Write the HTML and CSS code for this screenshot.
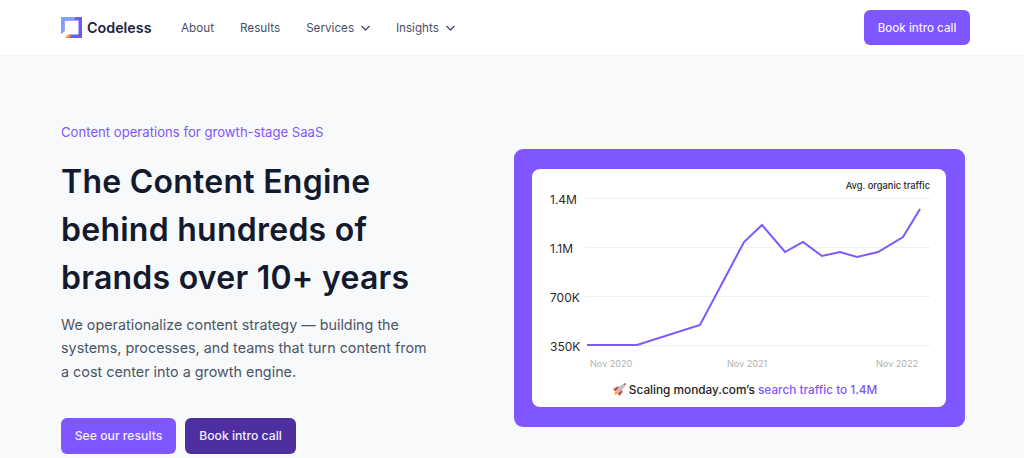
FILE: index.html
```html
<!DOCTYPE html>
<html lang="en">
<head>
	<meta charset="UTF-8">
	<title>Codeless</title>
	<link rel="stylesheet" href="styles.css">
</head>
<body>
	<header class="header">
		<a class="logo" href="#">
			<svg class="logoMark" viewBox="0 0 22 22" width="22" height="22">
				<path d="M0 0H21V21H6L9 17.500H17.500V3.500H3.500V14L0 17Z" fill="#6a5cf5"/>
				<path d="M0 0H15L12 3.500H3.500V14L0 17Z" fill="#7fa2ff"/>
				<path d="M4 21L7 17.500H11L8 21Z" fill="#f7903f"/>
			</svg>
			<span>Codeless</span>
		</a>
		<nav class="nav">
			<a href="#">About</a>
			<a href="#">Results</a>
			<a href="#">Services <svg class="chev" viewBox="0 0 9 6" width="9" height="6"><path d="M.5 1L4.500 5L8.500 1"/></svg></a>
			<a href="#">Insights <svg class="chev" viewBox="0 0 9 6" width="9" height="6"><path d="M.5 1L4.500 5L8.500 1"/></svg></a>
		</nav>
		<a class="btn btnHeader" href="#">Book intro call</a>
	</header>
	<main class="hero">
		<div class="heroText">
			<p class="eyebrow">Content operations for growth-stage SaaS</p>
			<h1>The Content Engine behind hundreds of brands over 10+ years</h1>
			<p class="lead">We operationalize content strategy — building the systems, processes, and teams that turn content from a cost center into a growth engine.</p>
			<div class="actions">
				<a class="btn" href="#">See our results</a>
				<a class="btn btnDark" href="#">Book intro call</a>
			</div>
		</div>
		<div class="panel">
			<div class="card">
				<svg class="chart" viewBox="0 0 414 208" width="414" height="208">
					<g class="grid">
						<path d="M53 29.5H398"/>
						<path d="M53 78.5H398"/>
						<path d="M53 127.5H398"/>
						<path d="M53 176.5H398"/>
					</g>
					<text class="title" x="398" y="20" text-anchor="end">Avg. organic traffic</text>
					<g class="yLabels">
						<text x="18" y="34.500">1.4M</text>
						<text x="18" y="83.500">1.1M</text>
						<text x="18" y="132.500">700K</text>
						<text x="18" y="181.500">350K</text>
					</g>
					<g class="xLabels">
						<text x="58" y="198">Nov 2020</text>
						<text x="195" y="198">Nov 2021</text>
						<text x="344" y="198">Nov 2022</text>
					</g>
					<polyline class="line" points="55,176 105,176 168,156 212,73 230,56 253,83 271,73 290,87 308,83 325,88 346,83 371,68 388,40"/>
				</svg>
				<p class="caption">
					<svg class="rocket" viewBox="0 0 14 14" width="13" height="13">
						<path d="M1 13L3 8L6 11Z" fill="#f6a623"/>
						<path d="M0 7L4 4H7L3 9Z" fill="#d8453e"/>
						<path d="M7 14L10 10V7L5 11Z" fill="#d8453e"/>
						<path d="M3 8.5L8 3Q10.500 1 14 0Q13 3.500 11 6L5.500 11Z" fill="#b8c2cc"/>
						<path d="M11 1Q12.500 .5 14 0Q13.500 1.500 13 3Z" fill="#d8453e"/>
					</svg>
					Scaling monday.com’s <span class="accent">search traffic to 1.4M</span>
				</p>
			</div>
		</div>
	</main>
</body>
</html>
```

FILE: styles.css
```css
* {
	margin: 0;
	padding: 0;
	box-sizing: border-box;
}
body {
	background-color: #f8f9fb;
	color: #141a2e;
	font-family: "Inter", "Liberation Sans", sans-serif;
}
a {
	color: inherit;
	text-decoration: none;
}
.header {
	display: flex;
	align-items: center;
	height: 56px;
	padding: 0 54px 0 61px;
	background-color: #fff;
	border-bottom: 1px solid #f4f5f7;
}
.logo {
	display: flex;
	align-items: center;
	gap: 4px;
	font-size: 14.300px;
	font-weight: 600;
	color: #20233f;
}
.logoMark {
	display: block;
}
.nav {
	display: flex;
	align-items: center;
	gap: 26px;
	margin-left: 29.500px;
	font-size: 11.700px;
	color: #4a4f68;
}
.chev {
	margin-left: 3.500px;
	vertical-align: 1px;
}
.chev path {
	fill: none;
	stroke: #4a4f68;
	stroke-width: 1.400;
}
.btn {
	display: flex;
	align-items: center;
	justify-content: center;
	height: 36px;
	width: 115px;
	background-color: #7f56ff;
	color: #f3efff;
	border-radius: 6px;
	font-size: 12.200px;
	font-weight: 500;
}
.btnHeader {
	width: 106px;
	height: 35px;
	margin-left: auto;
	font-size: 11.600px;
}
.btnDark {
	width: 111px;
	background-color: #4e2ea0;
}
.hero {
	display: flex;
	justify-content: space-between;
	padding: 68px 59px 4px 61px;
}
.heroText {
	width: 372px;
}
.eyebrow {
	font-size: 13.100px;
	line-height: 16px;
	letter-spacing: 0.02px;
	color: #7f56ff;
}
h1 {
	margin-top: 17.500px;
	font-size: 32px;
	font-weight: 600;
	line-height: 48px;
	letter-spacing: 0.25px;
}
.lead {
	margin-top: 11.500px;
	font-size: 14.350px;
	line-height: 23.300px;
	color: #4a5568;
}
.actions {
	display: flex;
	gap: 9px;
	margin-top: 35px;
}
.panel {
	align-self: flex-start;
	margin-top: 25px;
	padding: 20px 18px;
	width: 451px;
	height: 278px;
	background-color: #7f56ff;
	border-radius: 9px;
}
.card {
	width: 414px;
	height: 238px;
	background-color: #fff;
	border-radius: 8px;
}
.chart {
	display: block;
}
.grid path {
	stroke: #eeeff2;
	stroke-width: 1;
}
.title {
	font-size: 9.300px;
	font-weight: 500;
	fill: #2a2a2a;
}
.yLabels text {
	font-size: 12px;
	fill: #2a2a2a;
}
.xLabels text {
	font-size: 9.100px;
	fill: #b0b0b0;
}
.line {
	fill: none;
	stroke: #7f56ff;
	stroke-width: 2;
}
.caption {
	margin-top: 6px;
	padding-left: 12px;
	text-align: center;
	font-size: 11.800px;
	font-weight: 500;
	color: #222;
}
.rocket {
	vertical-align: -2px;
}
.accent {
	color: #7f56ff;
}
```
